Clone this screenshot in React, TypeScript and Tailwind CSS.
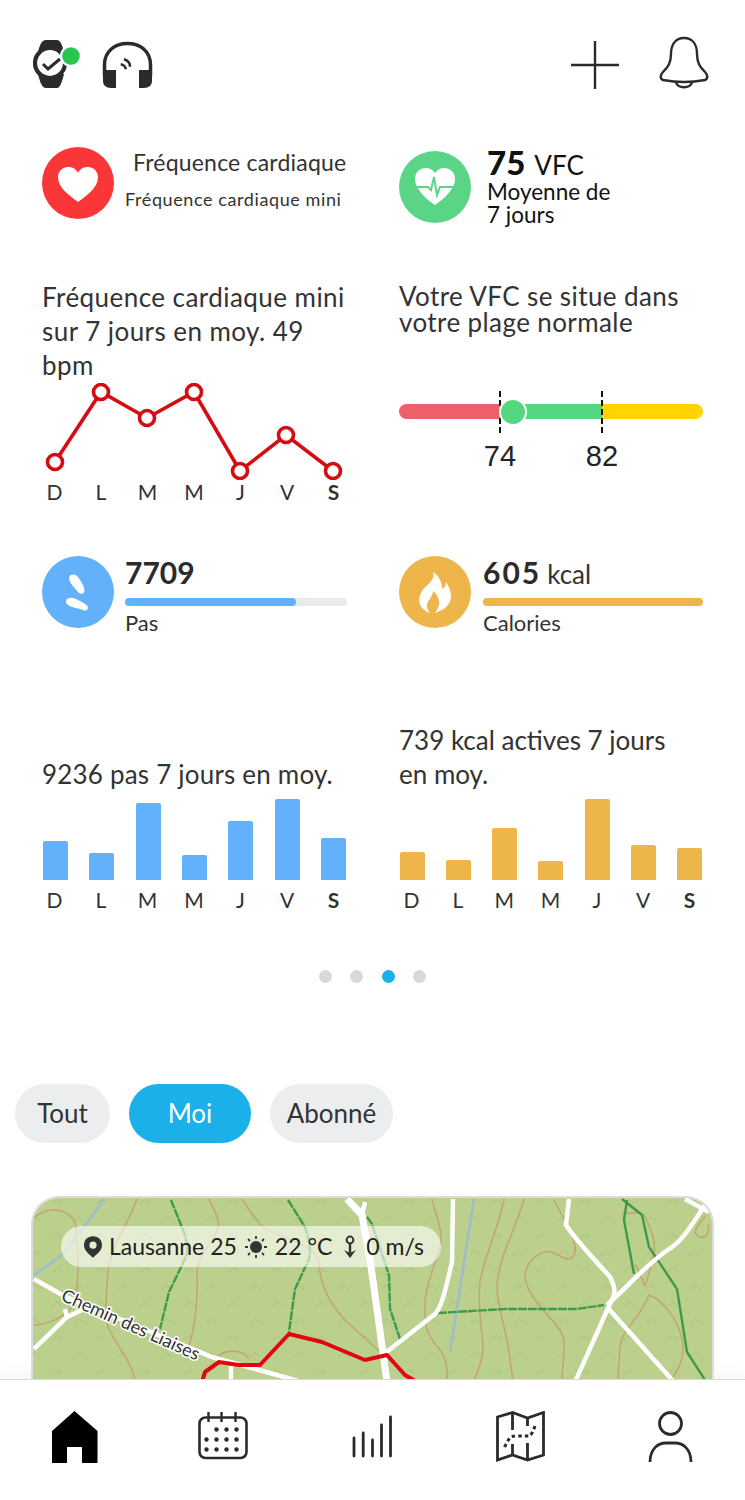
import { clsx } from "clsx";

const DAYS = ["D", "L", "M", "M", "J", "V", "S"];
const HEART_POINTS = [
  [13, 79],
  [59, 9],
  [105, 35],
  [152, 9],
  [198, 88],
  [244, 52],
  [291, 88],
];
const STEP_BARS = [39, 27, 77, 25, 59, 81, 42];
const KCAL_BARS = [28, 20, 52, 19, 81, 35, 32];

function DayAxis() {
  return (
    <div className="flex justify-between pr-[1px] text-[21px] leading-[24px] text-[#333]">
      {DAYS.map((d, i) => (
        <span key={i} className={clsx("w-[25px] text-center", i === 6 && "font-bold")}>
          {d}
        </span>
      ))}
    </div>
  );
}

function Bars({ values, color }: { values: number[]; color: string }) {
  return (
    <div className="-mt-[1px] flex h-[90px] items-end justify-between pl-[1px] pr-[1px]">
      {values.map((h, i) => (
        <div key={i} className={clsx("w-[25px] rounded-t-[2px]", color)} style={{ height: h }} />
      ))}
    </div>
  );
}

function WatchIcon() {
  return (
    <svg width="48" height="54" viewBox="0 0 48 54" className="block">
      <path
        d="M5 16 C7 8 9 4 13 4 H24 C27 4 29 8 31 16 Z M5 38 C7 46 9 52 13 52 H24 C27 52 29 46 31 38 Z"
        fill="#2b2b2b"
      />
      <circle cx="17" cy="27" r="15" fill="#fff" stroke="#2b2b2b" strokeWidth="4.2" />
      <path d="M10 28 L15 33 L27 23" fill="none" stroke="#2b2b2b" strokeWidth="3" />
      <circle cx="38" cy="20" r="11" fill="#fff" />
      <circle cx="38" cy="20" r="8.8" fill="#2ac54f" />
    </svg>
  );
}

function HeadsetIcon() {
  return (
    <svg width="52" height="50" viewBox="0 0 52 50" className="block">
      <path d="M2.5 36 V25 C2.5 11 13 3.5 25.5 3.5 C38 3.5 48.5 11 48.5 25 V36" fill="none" stroke="#2b2b2b" strokeWidth="3.5" />
      <path d="M1 30 H14 V48 H9 C4 48 1 45 1 41 Z M50 30 H37 V48 H42 C47 48 50 45 50 41 Z" fill="#2b2b2b" />
      <path d="M18.7 24.3 Q23 25 24 29.3 M22 19.3 Q28 21 28 26.7" fill="none" stroke="#2b2b2b" strokeWidth="2.5" />
    </svg>
  );
}

function PlusIcon() {
  return (
    <svg width="50" height="50" viewBox="0 0 50 50" className="block">
      <path d="M25 1 V49 M1 25 H49" stroke="#2b2b2b" strokeWidth="2.4" />
    </svg>
  );
}

function BellIcon() {
  return (
    <svg width="50" height="54" viewBox="0 0 50 54" className="block">
      <path
        d="M25 2 C34 2 38 9 38 18 C38 27 41 31 46 36 C49 39 49 43 46 44 C33 46.5 17 46.5 4 44 C1 43 1 39 4 36 C9 31 12 27 12 18 C12 9 16 2 25 2 Z"
        fill="none"
        stroke="#2b2b2b"
        strokeWidth="2.4"
      />
      <path d="M17 46 C18 53 32 53 33 46" fill="none" stroke="#2b2b2b" strokeWidth="2.4" />
    </svg>
  );
}

function Badge({ color, children }: { color: string; children: React.ReactNode }) {
  return (
    <div className={clsx("h-[72px] w-[72px] shrink-0 rounded-full", color)}>
      <svg width="72" height="72" viewBox="0 0 72 72" className="block">
        {children}
      </svg>
    </div>
  );
}

function Chevrons() {
  return (
    <pattern id="terrain" width="44" height="34" patternUnits="userSpaceOnUse">
      <path d="M6 12 L11 8 L16 12 M28 29 L33 25 L38 29" fill="none" stroke="#b1c785" strokeWidth="1.6" />
    </pattern>
  );
}

// Trail map, drawn in page-like coordinates so the lines are easy to adjust
function TrailMap() {
  const contours = [
    "M32 1215 C40 1210 48 1207 55 1208 C66 1210 73 1216 74 1226 L76 1255 C76 1275 76 1285 74 1296 C70 1312 50 1322 32 1323",
    "M135 1197 C125 1225 108 1245 106 1270 C104 1290 103 1310 106 1325 C115 1345 130 1360 133 1379",
    "M207 1197 C212 1210 218 1215 216 1226 C208 1245 195 1255 195 1270 C196 1295 194 1320 187 1345",
    "M240 1197 C250 1212 258 1225 268 1229 C290 1240 315 1245 317 1260 C318 1285 330 1305 345 1320 C358 1332 370 1342 378 1350",
    "M213 1357 C220 1348 240 1345 247 1357",
    "M430 1197 C433 1212 441 1228 439 1240 C435 1260 424 1280 423 1300 C422 1322 425 1332 434 1343 C442 1352 446 1360 445 1379",
    "M502 1197 C497 1225 482 1255 478 1280 C475 1305 480 1325 481 1345 C481 1360 475 1370 472 1379",
    "M522 1197 C515 1225 496 1255 495 1285 C496 1310 505 1330 507 1350 L511 1379",
    "M552 1198 C560 1215 575 1235 573 1250 C570 1262 562 1256 552 1251 C540 1245 523 1260 523 1275 C525 1295 545 1310 558 1328 C566 1340 560 1360 560 1379",
    "M620 1210 C628 1215 636 1205 643 1215 C650 1230 655 1240 651 1255 C648 1268 645 1280 643 1284 C640 1278 637 1268 633 1262",
    "M647 1293 C665 1300 680 1325 681 1345 C682 1358 675 1370 669 1378",
    "M647 1293 C638 1318 620 1325 618 1345 C617 1360 616 1370 616 1379",
    "M703 1214 C695 1225 690 1230 696 1234 C703 1238 708 1232 706 1222",
  ];
  const roads = [
    "M32 1277 L62 1294 L210 1355 L300 1380",
    "M32 1347 L65 1315 L80 1308 M63 1307 L65 1315",
    "M229 1364 V1380",
    "M451 1197 L450 1260 C444 1285 440 1305 433 1312 L382 1352",
    "M567 1197 L564 1223 C575 1240 595 1260 608 1275 C612 1282 613 1288 612 1293 L573 1380",
    "M703 1203 C690 1222 680 1240 667 1247 C645 1262 625 1285 605 1303",
    "M605 1305 L672 1380",
    "M683 1197 L707 1210",
    "M363 1200 L360 1213",
  ];
  const trails = [
    "M169 1198 L183 1233 C186 1245 186 1252 183 1257 L167 1290 L158 1327",
    "M286 1198 L303 1225 C308 1240 309 1250 307 1257 L293 1287 L287 1330",
    "M365 1215 L370 1222 L387 1273 L388 1307 L398 1337",
    "M436 1311 L503 1307 L543 1307 L575 1307 L602 1303",
    "M625 1198 L622 1218 L632 1272",
    "M620 1197 L640 1213 L647 1245 L675 1287 L685 1350 L703 1378",
  ];
  return (
    <svg width="683" height="190" viewBox="31 1196 683 190" className="block">
      <defs>
        <Chevrons />
      </defs>
      <rect x="31" y="1196" width="683" height="190" fill="#bbd08d" />
      <rect x="31" y="1196" width="683" height="190" fill="url(#terrain)" />
      {contours.map((d, i) => (
        <path key={i} d={d} fill="none" stroke="#c2a673" strokeWidth="1.6" />
      ))}
      <path d="M102 1197 L88 1217 L60 1253 L32 1273 M472 1197 L448 1350" fill="none" stroke="#9dbdcb" strokeWidth="2.6" />
      {trails.map((d, i) => (
        <path key={i} d={d} fill="none" stroke="#3f9a4b" strokeWidth="2.4" strokeDasharray={i < 4 ? "9 1" : undefined} />
      ))}
      {roads.map((d, i) => (
        <path key={i} d={d} fill="none" stroke="#fff" strokeWidth="4.5" />
      ))}
      <path d="M345 1197 L360 1213 L368 1257 L385 1380" fill="none" stroke="#fff" strokeWidth="7" />
      <path
        d="M200 1380 L203 1370 L217 1360 L237 1363 L258 1363 L287 1332 L320 1340 L363 1358 L385 1353 L403 1373 L415 1380"
        fill="none"
        stroke="#e2070f"
        strokeWidth="4"
        strokeLinejoin="round"
      />
      <text
        x="58"
        y="1298"
        transform="rotate(24 58 1298)"
        fontSize="18"
        fill="#333"
        stroke="#fff"
        strokeWidth="3"
        paintOrder="stroke"
        fontFamily="Lato, sans-serif"
      >
        Chemin des Liaises
      </text>
    </svg>
  );
}

function NavIcons() {
  return (
    <nav className="grid h-[121px] shrink-0 grid-cols-5 justify-items-center border-t border-[#d9d9d9] bg-white pt-[31px] shadow-[0_-6px_14px_rgba(0,0,0,0.04)]">
      <svg width="50" height="53" viewBox="0 0 50 53">
        <path d="M24.5 0 L47.5 20 V52 H32 V36 H17 V52 H2 V20 Z" fill="#000" />
      </svg>
      <svg width="50" height="53" viewBox="0 0 50 53" fill="none" stroke="#2b2b2b" className="-translate-x-[1px]">
        <rect x="1.5" y="6.5" width="47" height="40.5" rx="6" strokeWidth="2.6" />
        <path d="M10.5 1 V11 M23.5 1 V11 M37.5 1 V11" strokeWidth="2.4" />
        <g fill="#2b2b2b" stroke="none">
          {[18.5, 28.5, 38.5].map((y) =>
            [8.5, 18.5, 28.5, 38.5].map((x) =>
              y === 18.5 && x === 8.5 ? null : <circle key={`${x}-${y}`} cx={x} cy={y} r="2.2" />
            )
          )}
        </g>
      </svg>
      <svg width="50" height="53" viewBox="0 0 50 53" fill="none" stroke="#2b2b2b" strokeWidth="2.8" strokeLinecap="round">
        <path d="M6 27 V45 M15.2 22 V45 M24.5 29 V45 M33.5 14 V45 M42.5 6 V45" />
      </svg>
      <svg width="50" height="53" viewBox="0 0 50 53" fill="none" stroke="#2b2b2b" strokeWidth="2.8" className="-translate-x-[1px]">
        <path d="M1.5 6 L16.5 1.5 L31.5 7 L47.5 1.5 V44 L31.5 49 L16.5 44 L1.5 49 Z" />
        <path d="M16.5 1.5 V19 M31.5 7 V15 M31.5 32 V49 M16.5 33 V44" />
        <path d="M8.5 36 L13.5 27 Q15 25 22 25 H33 Q36 24 39 15" strokeDasharray="3.5 3" strokeWidth="3" />
      </svg>
      <svg width="50" height="53" viewBox="0 0 50 53" fill="none" stroke="#2b2b2b" strokeWidth="2.8">
        <circle cx="24.5" cy="12.5" r="11" />
        <path d="M4 51 C4 38 12 32 20 32 H29 C37 32 45 38 45 51" />
      </svg>
    </nav>
  );
}

export default function App() {
  return (
    <div
      className="flex h-[1500px] w-[745px] flex-col overflow-hidden bg-white text-[#333]"
      style={{ fontFamily: "Lato, sans-serif" }}
    >
      <main className="min-h-0 flex-1 overflow-hidden">
        {/* Top bar */}
        <header className="flex h-[90px] items-end justify-between pl-[33px] pr-[36px]">
          <div className="flex items-end gap-[21px]">
            <WatchIcon />
            <HeadsetIcon />
          </div>
          <div className="flex items-end gap-[39px]">
            <PlusIcon />
            <BellIcon />
          </div>
        </header>

        <section className="grid grid-cols-[305px_304px] gap-x-[52px] px-[42px]">
          {/* Heart rate summary */}
          <div className="mt-[57px] flex h-[133px] items-start gap-[11px]">
            <Badge color="bg-[#fb3639]">
              <path
                d="M36 55 C28 49 16 41 16 30 C16 24 21 20 26 20 C31 20 34 22 36 26 C38 22 41 20 46 20 C51 20 56 24 56 30 C56 41 44 49 36 55 Z"
                fill="#fff"
              />
            </Badge>
            <div className="whitespace-nowrap">
              <p className="pl-[8px] text-[23px] leading-[30px] tracking-[0.2px]">Fréquence cardiaque</p>
              <p className="mt-[10px] text-[18px] leading-[24px] tracking-[0.6px]">Fréquence cardiaque mini</p>
            </div>
          </div>

          {/* HRV summary */}
          <div className="mt-[61px] flex h-[129px] items-start gap-[16px]">
            <Badge color="bg-[#59d585]">
              <path
                d="M36 54 C28 49 16 38 16 28 C16 21 21 17 27 17 C31 17 34 19 36 22 C38 19 41 17 45 17 C51 17 56 21 56 28 C56 38 44 49 36 54 Z"
                fill="#fff"
              />
              <path d="M15 36 H29 L32 39 L35 26 L38 44 L41 36 H57" fill="none" stroke="#59d585" strokeWidth="2" />
            </Badge>
            <div className="-mt-[4px] whitespace-nowrap text-[#111]">
              <p className="flex items-baseline gap-[9px] leading-[30px]">
                <span className="text-[33px] font-black">75</span>
                <span className="text-[26px]">VFC</span>
              </p>
              <p className="text-[22.5px] leading-[23px]">
                Moyenne de
                <br />7 jours
              </p>
            </div>
          </div>

          {/* Minimum heart rate chart */}
          <div className="h-[276px]">
            <p className="h-[103px] text-[26px] leading-[34px] tracking-[0.45px]">
              Fréquence cardiaque mini sur 7 jours en moy. 49 bpm
            </p>
            <svg width="305" height="97" viewBox="0 0 305 97" className="block">
              <polyline
                points={HEART_POINTS.map((p) => p.join(",")).join(" ")}
                fill="none"
                stroke="#d40d12"
                strokeWidth="3.6"
              />
              {HEART_POINTS.map(([x, y], i) => (
                <circle key={i} cx={x} cy={y} r="7.5" fill="#fff" stroke="#d40d12" strokeWidth="3.6" />
              ))}
            </svg>
            <DayAxis />
          </div>

          {/* HRV range */}
          <div className="h-[276px]">
            <p className="pt-[3px] text-[26px] leading-[26px] tracking-[0.4px]">
              Votre VFC se situe dans votre plage normale
            </p>
            <div className="relative mt-[69px] flex h-[15px] overflow-visible">
              <div className="w-[101px] rounded-l-full bg-[#ec5f6b]" />
              <div className="w-[102px] bg-[#55d77f]" />
              <div className="flex-1 rounded-r-full bg-[#ffd400]" />
              <div className="absolute left-[100px] top-[-13px] h-[42px] border-l-2 border-dashed border-[#111]" />
              <div className="absolute left-[202px] top-[-13px] h-[42px] border-l-2 border-dashed border-[#111]" />
              <div className="absolute left-[100px] top-[-6px] h-[28px] w-[28px] rounded-full border-2 border-white bg-[#55d77f]" />
            </div>
            <div
              className="relative mt-[20px] h-[34px] text-[29px] leading-[34px] text-[#222]"
              style={{ fontFamily: '"Liberation Sans", sans-serif' }}
            >
              <span className="absolute left-[101px] -translate-x-1/2">74</span>
              <span className="absolute left-[203px] -translate-x-1/2">82</span>
            </div>
          </div>

          {/* Steps */}
          <div>
            <div className="flex h-[172px] items-start gap-[11px]">
              <Badge color="bg-[#64b1fb]">
                <path d="M27 22 C27 18 33 17 36 21 C39 25 42 30 42.5 34 C43 38 38 39 36 36 C33 32 27 27 27 22 Z" fill="#fff" />
                <path d="M24 45 C25 41 30 41 34 43 C38 45 43 47 45.5 50 C47 53 44 56 41 54 C36 52 30 52 26 49 C24 48 24 46 24 45 Z" fill="#fff" />
              </Badge>
              <div className="flex-1">
                <p className="h-[42px] text-[30px] font-bold leading-[33px] text-[#2b2b2b]">7709</p>
                <div className="h-[8px] rounded-full bg-[#e8eaeb]">
                  <div className="h-[8px] rounded-full bg-[#64b1fb]" style={{ width: "77%" }} />
                </div>
                <p className="mt-[4px] text-[22px] leading-[26px]">Pas</p>
              </div>
            </div>
            <p className="flex h-[63px] items-end text-[26px] leading-[34px] tracking-[0.2px]">9236 pas 7 jours en moy.</p>
            <Bars values={STEP_BARS} color="bg-[#64b1fb]" />
            <div className="mt-[8px]">
              <DayAxis />
            </div>
          </div>

          {/* Calories */}
          <div>
            <div className="flex h-[172px] items-start gap-[12px]">
              <Badge color="bg-[#eeb64a]">
                <path
                  d="M34 16 C37 25 26 29 22 37 C17 47 23 54 31 57 C27 52 27 47 31 43 C32 41 34 38 34 35 C38 38 41 44 40 49 C39 52 38 54 36 57 C45 54 52 49 52 40 C52 35 50 31 47 26 C47 30 45 32 43 33 C43 26 40 20 34 16 Z"
                  fill="#fff"
                />
              </Badge>
              <div className="flex-1">
                <p className="flex h-[42px] items-baseline gap-[6px] leading-[32px]">
                  <span className="text-[30px] font-bold tracking-[2px] text-[#2b2b2b]">605</span>
                  <span className="text-[26px]">kcal</span>
                </p>
                <div className="h-[8px] rounded-full bg-[#eeb64a]" />
                <p className="mt-[4px] text-[22px] leading-[26px]">Calories</p>
              </div>
            </div>
            <p className="-mt-[5px] h-[68px] text-[26px] leading-[34px]">
              739 kcal actives 7 jours
              <br />
              en moy.
            </p>
            <Bars values={KCAL_BARS} color="bg-[#eeb64a]" />
            <div className="mt-[8px]">
              <DayAxis />
            </div>
          </div>
        </section>

        {/* Pager */}
        <div className="mt-[58px] flex justify-center gap-[18.5px]">
          <span className="h-[13px] w-[13px] rounded-full bg-[#d8d8d8]" />
          <span className="h-[13px] w-[13px] rounded-full bg-[#d8d8d8]" />
          <span className="h-[13px] w-[13px] rounded-full bg-[#1bb0ea]" />
          <span className="h-[13px] w-[13px] rounded-full bg-[#d8d8d8]" />
        </div>

        {/* Feed filter */}
        <div className="mt-[101px] flex gap-[19px] pl-[15px] text-[26px]">
          <button className="h-[59px] w-[95px] rounded-full bg-[#ebedef]">Tout</button>
          <button className="h-[59px] w-[122px] rounded-full bg-[#1bb0ea] text-white">Moi</button>
          <button className="h-[59px] w-[123px] rounded-full bg-[#ebedef]">Abonné</button>
        </div>

        {/* Activity card */}
        <div className="relative mx-[31px] mt-[53px] h-[240px] overflow-hidden rounded-t-[28px] border-x-2 border-t-2 border-[#dcdcdc]">
          <TrailMap />
          <div className="absolute left-[28px] top-[28px] flex h-[41px] w-[380px] items-center gap-[7px] rounded-full bg-white/60 pl-[23px] text-[23px] text-[#222]">
            <svg width="18" height="24" viewBox="0 0 20 24" className="shrink-0">
              <path
                fillRule="evenodd"
                d="M10 0 C16 0 20 4 20 10 C20 16 14 20 10 24 C6 20 0 16 0 10 C0 4 4 0 10 0 Z M10 6 A4 4 0 1 0 10 14 A4 4 0 1 0 10 6 Z"
                fill="#333"
              />
            </svg>
            <span className="whitespace-nowrap">Lausanne 25</span>
            <svg width="24" height="24" viewBox="0 0 24 24" className="shrink-0">
              <circle cx="12" cy="12" r="6" fill="#333" />
              <path
                d="M12 1 V4 M12 20 V23 M1 12 H4 M20 12 H23 M4 4 L6 6 M18 18 L20 20 M20 4 L18 6 M6 18 L4 20"
                stroke="#333"
                strokeWidth="1.8"
              />
            </svg>
            <span className="whitespace-nowrap">22 °C</span>
            <svg width="14" height="24" viewBox="0 0 14 24" className="ml-[4px] shrink-0">
              <circle cx="7" cy="5" r="3.4" fill="none" stroke="#333" strokeWidth="2" />
              <path d="M7 8 V20" stroke="#333" strokeWidth="2.4" />
              <path d="M1 15 L7 23 L13 15 L7 18 Z" fill="#333" />
            </svg>
            <span className="ml-[2px] whitespace-nowrap">0 m/s</span>
          </div>
        </div>
      </main>

      <NavIcons />
    </div>
  );
}
